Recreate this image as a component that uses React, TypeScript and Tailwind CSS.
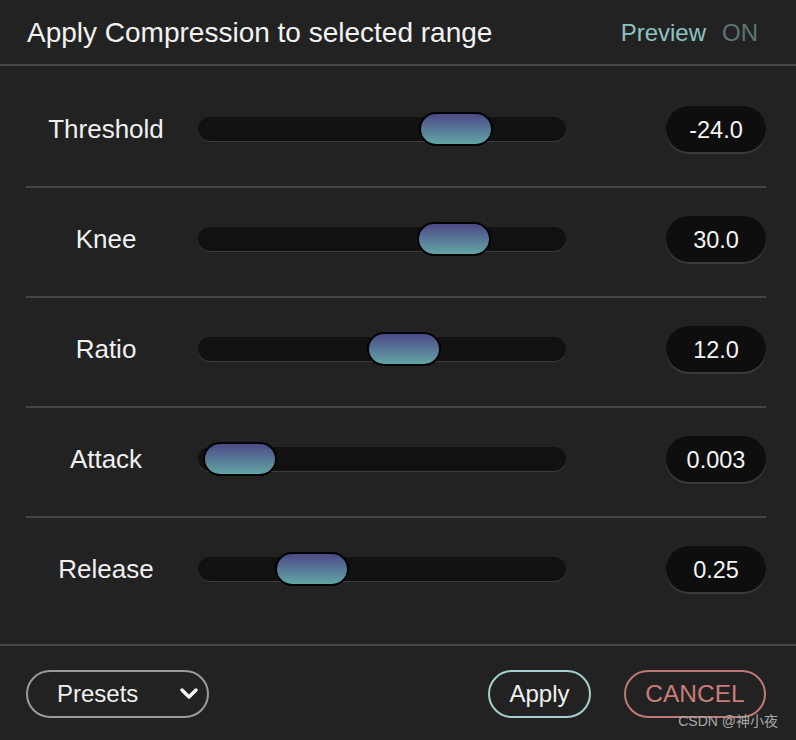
const params = [
  { label: "Threshold", value: "-24.0", left: 221 },
  { label: "Knee", value: "30.0", left: 219 },
  { label: "Ratio", value: "12.0", left: 169 },
  { label: "Attack", value: "0.003", left: 5 },
  { label: "Release", value: "0.25", left: 77 },
];

function Slider({ left }: { left: number }) {
  return (
    <div className="relative ml-[12px] h-[24px] w-[368px] rounded-full bg-[#111111] shadow-[0_1px_0_#3c3c3c]">
      <div
        className="absolute top-[-5px] h-[34px] w-[74px] rounded-full border-2 border-black bg-gradient-to-b from-[#4b4986] to-[#62a5a5]"
        style={{ left }}
      />
    </div>
  );
}

export default function App() {
  return (
    <div className="relative h-[740px] w-[796px] bg-[#222222] font-['Liberation_Sans',Arial,sans-serif]">
      <header className="flex h-[66px] items-center justify-between border-b-2 border-[#474747] pl-[27px] pr-[38px] pt-[2px]">
        <h1 className="text-[28px] text-[#f2f2f2]">Apply Compression to selected range</h1>
        <div className="flex gap-[16px] text-[24px]">
          <span className="text-[#8ec3c3]">Preview</span>
          <span className="text-[#5e7474]">ON</span>
        </div>
      </header>

      <div className="ml-[26px] mr-[30px] pb-[18px] pt-[12px]">
        {params.map((p, i) => (
          <div
            key={p.label}
            className={
              i < params.length - 1
                ? "flex h-[110px] items-center border-b-2 border-[#444444] pb-[6px]"
                : "flex h-[108px] items-center pb-[6px]"
            }
          >
            <div className="w-[160px] text-center text-[26px] text-[#f0f0f0]">{p.label}</div>
            <Slider left={p.left} />
            <div className="ml-auto flex h-[46px] w-[100px] items-center justify-center rounded-full bg-[#0e0e0e] pt-[3px] text-[23.5px] text-[#f4f4f4] shadow-[0_2px_0_#3a3a3a]">
              {p.value}
            </div>
          </div>
        ))}
      </div>

      <footer className="flex h-[94px] items-center border-t-2 border-[#474747] pl-[26px] pr-[30px] pt-[4px]">
        <button className="flex h-[48px] w-[183px] items-center justify-between rounded-full border-2 border-[#9a9a9a] pl-[29px] pr-[8px] text-[24px] text-[#f0f0f0]">
          Presets
          <svg width="20" height="14" viewBox="0 0 20 14" fill="none">
            <path d="M3 3l7 7 7-7" stroke="#f4f4f4" strokeWidth="3.5" strokeLinecap="round" strokeLinejoin="round" />
          </svg>
        </button>
        <button className="ml-auto h-[48px] w-[103px] rounded-full border-2 border-[#a6cfcf] text-[24px] text-[#f0f0f0]">
          Apply
        </button>
        <button className="ml-[33px] h-[48px] w-[142px] rounded-full border-2 border-[#c07777] text-[24.5px] text-[#c97d7b]">
          CANCEL
        </button>
      </footer>

      <div className="absolute bottom-[8px] right-[18px] text-[14px] text-[#a8a8a8] font-['Liberation_Sans','Noto_Sans_CJK_SC',sans-serif]">
        CSDN @神小夜
      </div>
    </div>
  );
}
